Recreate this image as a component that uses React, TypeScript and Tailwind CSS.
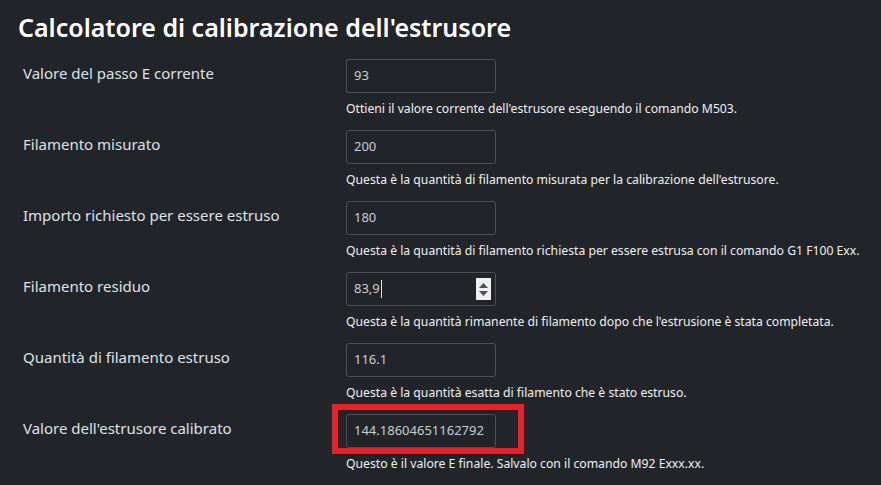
import React from 'react'

const rows = [
  {
    label: 'Valore del passo E corrente',
    value: '93',
    help: "Ottieni il valore corrente dell'estrusore eseguendo il comando M503.",
  },
  {
    label: 'Filamento misurato',
    value: '200',
    help: "Questa è la quantità di filamento misurata per la calibrazione dell'estrusore.",
  },
  {
    label: 'Importo richiesto per essere estruso',
    value: '180',
    help: 'Questa è la quantità di filamento richiesta per essere estrusa con il comando G1 F100 Exx.',
  },
  {
    label: 'Filamento residuo',
    value: '83,9',
    help: "Questa è la quantità rimanente di filamento dopo che l'estrusione è stata completata.",
    spinner: true,
  },
  {
    label: 'Quantità di filamento estruso',
    value: '116.1',
    help: 'Questa è la quantità esatta di filamento che è stato estruso.',
  },
  {
    label: "Valore dell'estrusore calibrato",
    value: '144.18604651162792',
    help: 'Questo è il valore E finale. Salvalo con il comando M92 Exxx.xx.',
    marked: true,
  },
]

function Spinner() {
  return (
    <div className="flex h-[22px] w-[15px] flex-col items-center justify-center gap-[3px] bg-[#f0f0f0]">
      <svg width="9" height="5" viewBox="0 0 9 5">
        <path d="M4.5 0L9 5H0z" fill="#505050" />
      </svg>
      <svg width="9" height="5" viewBox="0 0 9 5">
        <path d="M0 0h9L4.5 5z" fill="#505050" />
      </svg>
    </div>
  )
}

export default function App() {
  return (
    <div className="min-h-[485px] w-full bg-[#212529] pl-[18px] font-['Noto_Sans','Open_Sans',sans-serif] text-[#dee2e6]">
      <h2 className="pt-[9px] text-[25px] font-semibold leading-[36px] text-white">
        Calcolatore di calibrazione dell'estrusore
      </h2>
      <div className="mt-[14px] flex flex-col">
        {rows.map((r) => (
          <div key={r.label} className="flex h-[71px]">
            <div className="w-[328px] pl-[5px] pt-[2px] text-[15px] leading-[24px]">{r.label}</div>
            <div className="relative flex flex-col">
              {r.marked && (
                <div className="absolute left-[-14px] top-[-10px] h-[50px] w-[192px] border-[6px] border-[#e8202a]" />
              )}
              <div className="flex h-[34px] w-[150px] items-center justify-between rounded-[3px] border border-[#495057] bg-[#212529] pl-[7px] pr-[4px] text-[13px] text-[#c9cdd1]">
                <span className="flex items-center">
                  {r.value}
                  {r.spinner && <span className="ml-[1px] inline-block h-[18px] w-px bg-[#dee2e6]" />}
                </span>
                {r.spinner && <Spinner />}
              </div>
              <div className="mt-[6px] whitespace-nowrap text-[12.2px] leading-[20px] text-[#f0f0f0]">{r.help}</div>
            </div>
          </div>
        ))}
      </div>
    </div>
  )
}
